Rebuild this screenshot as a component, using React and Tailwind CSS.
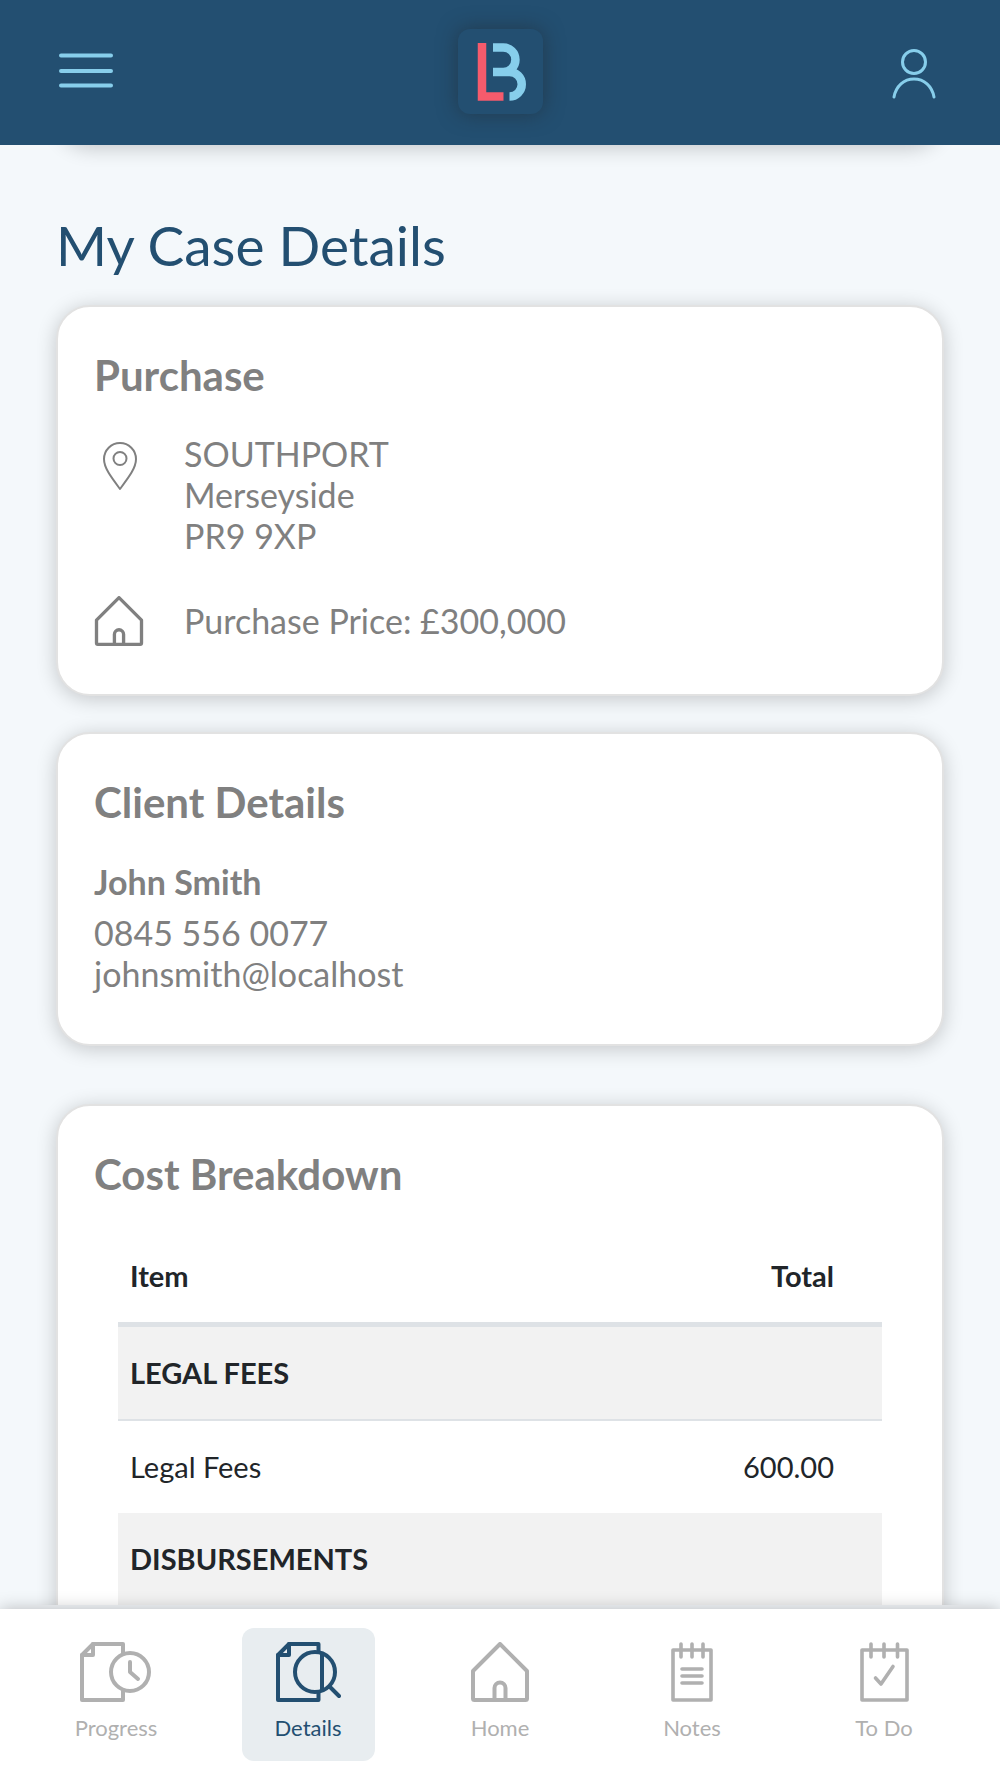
const icon = {
  fill: "none",
  stroke: "currentColor",
  strokeLinecap: "round",
  strokeLinejoin: "round",
  "aria-hidden": true,
};

function MenuIcon() {
  return (
    <svg width="56" height="36" viewBox="0 0 56 36" strokeWidth="4" {...icon}>
      <path d="M3 2.500H53M3 18H53M3 32.500H53" />
    </svg>
  );
}

function UserIcon() {
  return (
    <svg width="44" height="50" viewBox="0 0 44 50" strokeWidth="3" {...icon}>
      <circle cx="22" cy="13" r="11.500" />
      <path d="M2 48C4 37 12 30 22 30C32 30 40 37 42 48" />
    </svg>
  );
}

function Logo() {
  return (
    <svg width="50" height="58" viewBox="0 0 50 58" fill="none" role="img" aria-label="LB" overflow="visible">
      <path d="M7 0V53.500H28.500" stroke="#f65b6c" strokeWidth="8.500" />
      <path
        d="M18 4.500H28.200A12.250 12.250 0 0 1 28.200 29H18M28.200 29H34.500A12.250 12.250 0 0 1 34.500 53.500"
        stroke="#87ceeb"
        strokeWidth="8.500"
      />
    </svg>
  );
}

function PinIcon() {
  return (
    <svg width="50" height="50" viewBox="0 0 50 50" strokeWidth="2" {...icon}>
      <path d="M26 48C17 36 10 27 10 18A16 16 0 0 1 42 18C42 27 35 36 26 48Z" />
      <circle cx="26" cy="17.500" r="6.500" />
    </svg>
  );
}

function HouseIcon({ size }) {
  return (
    <svg width={size} height={size} viewBox="0 0 60 60" strokeWidth="4" {...icon}>
      <path d="M30 2L57 29V56.500Q57 58 55.500 58H4.500Q3 58 3 56.500V29Z" />
      <path d="M24.500 58V46A5.500 5.500 0 0 1 35.500 46V58" />
    </svg>
  );
}

function ProgressIcon() {
  return (
    <svg width="72" height="60" viewBox="0 0 72 60" strokeWidth="4" {...icon}>
      <path d="M43 11V2H13L2 13V58H43V49" />
      <path d="M13 2V13H2" />
      <circle cx="50" cy="30" r="19" />
      <path d="M50 20V30L58 37" />
    </svg>
  );
}

function DetailsIcon() {
  return (
    <svg width="65" height="60" viewBox="0 0 65 60" strokeWidth="4" {...icon}>
      <path d="M42.500 10V2H13L2 13V58H42.500V50" />
      <path d="M13 2V13H2" />
      <circle cx="39" cy="30" r="20" />
      <path d="M46 12V48M54 45L63 54" />
    </svg>
  );
}

function NotesIcon() {
  return (
    <svg width="44" height="60" viewBox="0 0 44 60" strokeWidth="3.600" {...icon}>
      <path d="M3 8H41V58H3ZM11 2V15M22 2V15M33 2V15M12 27H32M12 34H32M12 41H32" />
    </svg>
  );
}

function TodoIcon() {
  return (
    <svg width="50" height="60" viewBox="0 0 50 60" strokeWidth="3.600" {...icon}>
      <path d="M3 8H48V58H3ZM12 2V15M25 2V15M38.500 2V15M16.500 36L22 42L34 24.500" />
    </svg>
  );
}

const tabs = [
  { label: "Progress", Icon: ProgressIcon },
  { label: "Details", Icon: DetailsIcon, active: true },
  { label: "Home", Icon: () => <HouseIcon size={60} /> },
  { label: "Notes", Icon: NotesIcon },
  { label: "To Do", Icon: TodoIcon },
];

function Card({ title, className, children }) {
  return (
    <section
      className={`rounded-[34px] border-2 border-[#e2e2e2] bg-white px-9 pt-10 shadow-[0_3px_20px_rgba(0,0,0,0.2)] ${className}`}
    >
      <h2 className="text-[42px] leading-[56px] font-bold">{title}</h2>
      {children}
    </section>
  );
}

export default function App() {
  return (
    <div className="flex h-screen flex-col bg-[#f4f8fb] font-['Lato','Liberation_Sans',sans-serif] text-[#808080]">
      <header className="z-10 grid shrink-0 grid-cols-3 items-start bg-[#234f71] px-14 pt-[29px] pb-[31px] text-[#87ceeb]">
        <button type="button" aria-label="Menu" className="mt-6 ml-0.5 justify-self-start">
          <MenuIcon />
        </button>
        <a
          href="#home"
          className="flex size-[85px] items-center justify-center justify-self-center rounded-xl bg-[#234f71] shadow-[0_0_20px_rgba(33,37,41,0.5)]"
        >
          <Logo />
        </a>
        <button type="button" aria-label="Account" className="mt-5 mr-2 justify-self-end">
          <UserIcon />
        </button>
      </header>

      <main className="mb-1 min-h-0 flex-1 overflow-y-auto px-14 [scrollbar-width:none]">
        <div className="-mt-20 h-20 rounded-[34px] bg-white shadow-[0_3px_20px_rgba(0,0,0,0.2)]" />

        <h1 className="mt-16 text-[55px] leading-[72px] text-[#234f71]">My Case Details</h1>

        <Card title="Purchase" className="mt-6 pb-12">
          <div className="mt-[30px] flex gap-10 text-[34px] leading-[41px]">
            <div className="pt-2">
              <PinIcon />
            </div>
            <address className="not-italic">
              SOUTHPORT
              <br />
              Merseyside
              <br />
              PR9 9XP
            </address>
          </div>
          <div className="mt-10 flex items-center gap-10 text-[34px] leading-[50px]">
            <HouseIcon size={50} />
            <p>Purchase Price: £300,000</p>
          </div>
        </Card>

        <Card title="Client Details" className="mt-9 pb-[50px]">
          <h3 className="mt-7 text-[34px] leading-[48px] font-bold">John Smith</h3>
          <p className="mt-1.5 text-[34px] leading-[41px]">0845 556 0077</p>
          <p className="text-[34px] leading-[41px]">johnsmith@localhost</p>
        </Card>

        <Card title="Cost Breakdown" className="mt-[58px] pb-12">
          <div className="mt-7 px-6">
            <table className="w-full text-left text-[29px] leading-[44px] text-[#212529]">
              <thead>
                <tr className="border-b-5 border-[#dee2e6]">
                  <th className="py-6 pl-3">Item</th>
                  <th className="py-6 pr-12 text-right">Total</th>
                </tr>
              </thead>
              <tbody>
                <tr className="border-b-2 border-[#dee2e6] bg-[#f2f2f2]">
                  <th colSpan={2} className="py-6 pl-3">LEGAL FEES</th>
                </tr>
                <tr>
                  <td className="py-6 pl-3">Legal Fees</td>
                  <td className="py-6 pr-12 text-right">600.00</td>
                </tr>
                <tr className="bg-[#f2f2f2]">
                  <th colSpan={2} className="py-6 pl-3">DISBURSEMENTS</th>
                </tr>
              </tbody>
            </table>
          </div>
        </Card>
      </main>

      <nav className="z-10 grid shrink-0 grid-cols-5 bg-white px-5 pt-[19px] pb-[17px] shadow-[0_0_16px_rgba(0,0,0,0.25)]">
        {tabs.map(({ label, Icon, active }) => (
          <a
            key={label}
            href={`#${label}`}
            aria-current={active ? "page" : undefined}
            className={`flex h-[133px] w-[133px] flex-col items-center justify-self-center rounded-xl pt-3.5 text-[22px] leading-7 ${
              active ? "bg-[#e8edf0] text-[#234f71]" : "text-[#b0b0b0]"
            }`}
          >
            <Icon />
            <span className="mt-3">{label}</span>
          </a>
        ))}
      </nav>
    </div>
  );
}
